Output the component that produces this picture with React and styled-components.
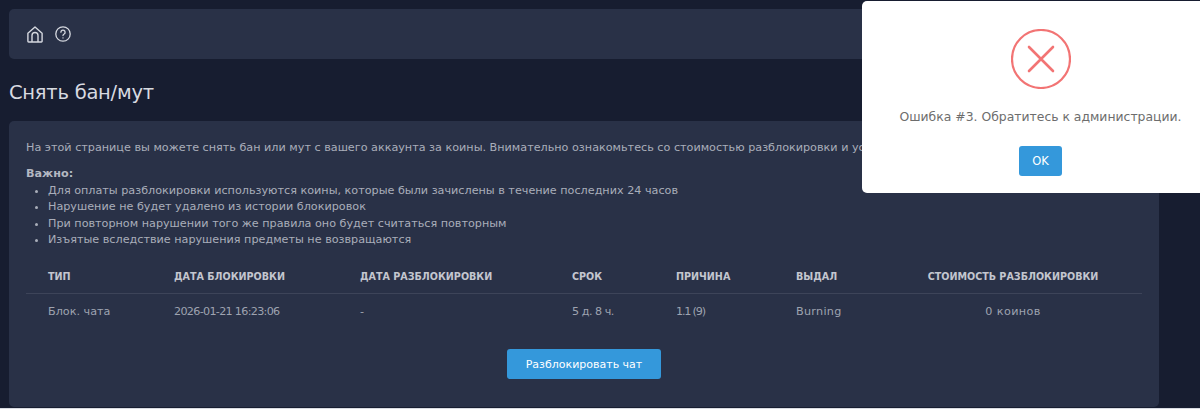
import styled, { createGlobalStyle } from "styled-components";

const Global = createGlobalStyle`
  html, body {
    margin: 0;
    height: 100%;
    overflow: hidden;
    background: #d9dce3;
  }
  body {
    font-family: "DejaVu Sans", "Open Sans", sans-serif;
  }
`;

const Page = styled.div`
  width: 100%;
  height: 408px;
  overflow: hidden;
  box-sizing: border-box;
  padding: 9px 41px 0 9px;
  background: #171d30;
`;

const TopBar = styled.div`
  height: 50px;
  display: flex;
  align-items: center;
  gap: 12px;
  padding-left: 18px;
  border-radius: 5px;
  background: #293147;
  color: #d5d8df;
`;

const Title = styled.h1`
  margin: 22px 0 16px;
  font-size: 19.5px;
  line-height: 24px;
  font-weight: 400;
  letter-spacing: -0.25px;
  color: #d8dae0;
`;

const Card = styled.div`
  height: 286px;
  box-sizing: border-box;
  padding: 20px 17px 0;
  border-radius: 5px;
  background: #293147;
  color: #a9aeba;
  font-size: 11.2px;
`;

const Intro = styled.p`
  margin: 0 0 12px;
  line-height: 14px;
  white-space: nowrap;
`;

const Note = styled.div`
  margin-bottom: 2px;
  line-height: 14px;
  font-weight: 700;
  color: #b3b7c2;
`;

const Rules = styled.ul`
  margin: 0 0 22px;
  padding-left: 22px;
  line-height: 16.3px;
`;

const Table = styled.div`
  display: grid;
  grid-template-columns: 148px 186px 212px 104px 120px 88px 1fr;
`;

const Head = styled.div`
  padding: 0 0 10px ${(p) => (p.$first ? "22px" : "0")};
  line-height: 13px;
  font-size: 9.6px;
  font-weight: 700;
  text-transform: uppercase;
  white-space: nowrap;
  color: #c3c6cf;
  border-bottom: 1px solid #3d4459;
  text-align: ${(p) => (p.$center ? "center" : "left")};
`;

const Cell = styled.div`
  padding: 11px 0 0 ${(p) => (p.$first ? "22px" : "0")};
  line-height: 14px;
  white-space: nowrap;
  color: #9ea3b0;
  letter-spacing: ${(p) => p.$tight || 0}px;
  text-align: ${(p) => (p.$center ? "center" : "left")};
`;

const Actions = styled.div`
  display: flex;
  justify-content: center;
  margin-top: 30px;
`;

const PrimaryButton = styled.button`
  border: 0;
  border-radius: 3px;
  background: #3498db;
  color: #fff;
  font-family: inherit;
  font-size: ${(p) => p.$size}px;
  font-weight: 500;
  height: ${(p) => p.$height}px;
  width: ${(p) => p.$width}px;
  padding: 0;
`;

const Alert = styled.div`
  position: fixed;
  top: 1px;
  left: 862px;
  width: 357px;
  height: 192px;
  padding-top: 28px;
  box-sizing: border-box;
  border-radius: 5px;
  background: #fff;
  display: flex;
  flex-direction: column;
  align-items: center;
  color: #6d6d6d;
`;

const AlertText = styled.div`
  margin: 19px 0 20px;
  font-size: 12.4px;
  line-height: 18px;
  white-space: nowrap;
`;

function HomeIcon() {
  return (
    <svg width="16" height="17" viewBox="0 0 16 17" fill="none" stroke="currentColor" strokeWidth="1.4" strokeLinejoin="round">
      <path d="M.9 7.2 8 1l7.1 6.2v8.1a.7.7 0 0 1-.7.7H1.6a.7.7 0 0 1-.7-.7z" />
      <path d="M5 16V9.5a3 3 0 0 1 6 0V16" />
    </svg>
  );
}

function HelpIcon() {
  return (
    <svg width="16" height="16" viewBox="0 0 16 16" fill="none" stroke="currentColor" strokeWidth="1.3" strokeLinecap="round">
      <circle cx="8" cy="8" r="7.2" />
      <path d="M5.9 6.2a2.1 2.1 0 1 1 3.2 1.8c-.7.4-1.1.9-1.1 1.6" />
      <path d="M8 11.8v.1" />
    </svg>
  );
}

function ErrorIcon() {
  return (
    <svg width="60" height="60" viewBox="0 0 60 60" fill="none" stroke="#f27474" strokeWidth="2.2" strokeLinecap="round">
      <circle cx="30" cy="30" r="29" />
      <path d="M18 18l24 24M42 18 18 42" strokeWidth="2.6" />
    </svg>
  );
}

const columns = ["Тип", "Дата блокировки", "Дата разблокировки", "Срок", "Причина", "Выдал", "Стоимость разблокировки"];

const row = [
  { value: "Блок. чата" },
  { value: "2026-01-21 16:23:06", tight: -0.7 },
  { value: "-" },
  { value: "5 д. 8 ч.", tight: -0.5 },
  { value: "1.1 (9)", tight: -1.2 },
  { value: "Burning", tight: 0.3 },
  { value: "0 коинов", tight: 0.4 },
];

const rules = [
  "Для оплаты разблокировки используются коины, которые были зачислены в течение последних 24 часов",
  "Нарушение не будет удалено из истории блокировок",
  "При повторном нарушении того же правила оно будет считаться повторным",
  "Изъятые вследствие нарушения предметы не возвращаются",
];

export default function App() {
  return (
    <>
      <Global />
      <Page>
        <TopBar>
          <HomeIcon />
          <HelpIcon />
        </TopBar>
        <Title>Снять бан/мут</Title>
        <Card>
          <Intro>
            На этой странице вы можете снять бан или мут с вашего аккаунта за коины. Внимательно ознакомьтесь со стоимостью разблокировки и условиями
          </Intro>
          <Note>Важно:</Note>
          <Rules>
            {rules.map((rule) => (
              <li key={rule}>{rule}</li>
            ))}
          </Rules>
          <Table>
            {columns.map((col, i) => (
              <Head key={col} $first={i === 0} $center={i === 6}>
                {col}
              </Head>
            ))}
            {row.map((cell, i) => (
              <Cell key={cell.value} $first={i === 0} $center={i === 6} $tight={cell.tight}>
                {cell.value}
              </Cell>
            ))}
          </Table>
          <Actions>
            <PrimaryButton $size={11} $height={30} $width={154}>
              Разблокировать чат
            </PrimaryButton>
          </Actions>
        </Card>
      </Page>
      <Alert>
        <ErrorIcon />
        <AlertText>Ошибка #3. Обратитесь к администрации.</AlertText>
        <PrimaryButton $size={11.5} $height={30} $width={43}>
          OK
        </PrimaryButton>
      </Alert>
    </>
  );
}
